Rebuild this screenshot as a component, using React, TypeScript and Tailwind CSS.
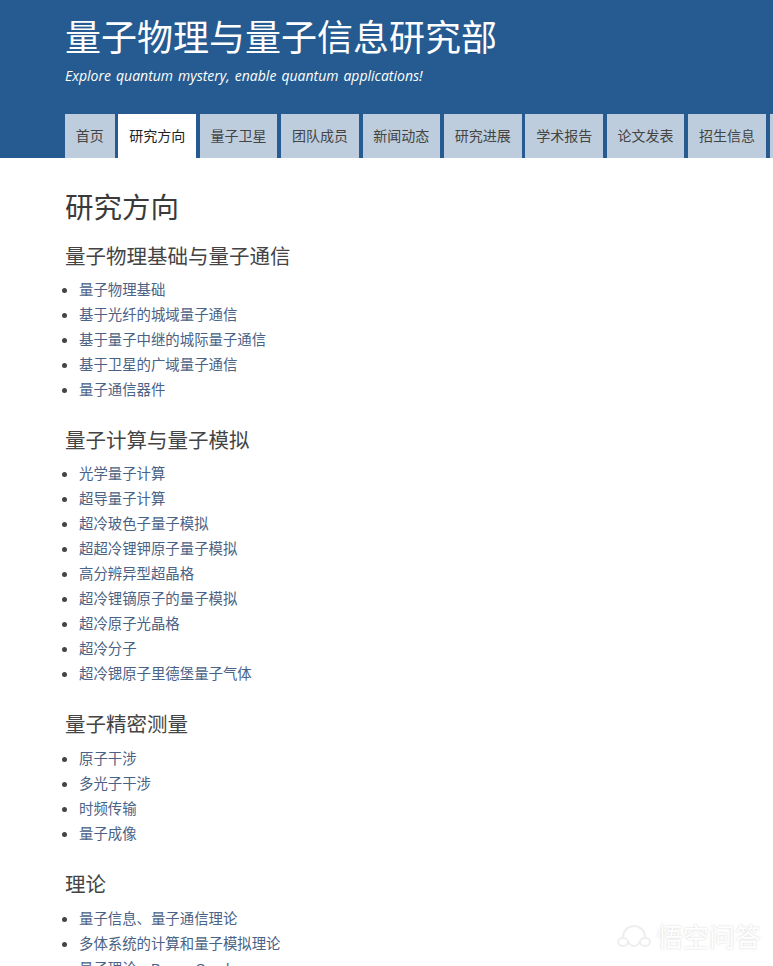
const tabs = ["首页", "研究方向", "量子卫星", "团队成员", "新闻动态", "研究进展", "学术报告", "论文发表", "招生信息"];

const sections = [
  {
    title: "量子物理基础与量子通信",
    items: ["量子物理基础", "基于光纤的城域量子通信", "基于量子中继的城际量子通信", "基于卫星的广域量子通信", "量子通信器件"],
  },
  {
    title: "量子计算与量子模拟",
    items: [
      "光学量子计算",
      "超导量子计算",
      "超冷玻色子量子模拟",
      "超超冷锂钾原子量子模拟",
      "高分辨异型超晶格",
      "超冷锂镝原子的量子模拟",
      "超冷原子光晶格",
      "超冷分子",
      "超冷锶原子里德堡量子气体",
    ],
  },
  {
    title: "量子精密测量",
    items: ["原子干涉", "多光子干涉", "时频传输", "量子成像"],
  },
  {
    title: "理论",
    items: ["量子信息、量子通信理论", "多体系统的计算和量子模拟理论", "量子理论、Boson Sand"],
  },
];

export default function App() {
  return (
    <div className="relative h-[966px] overflow-hidden bg-white font-['Liberation_Sans','Noto_Sans_CJK_SC',sans-serif]">
      {/* Header */}
      <header className="h-[158px] bg-[#255b90] pl-[65px] overflow-hidden flex flex-col">
        <h1 className="mt-[15px] text-[36px] leading-[48px] text-white whitespace-nowrap">量子物理与量子信息研究部</h1>
        <p className="mt-[3px] text-[14px] leading-[20px] italic text-white whitespace-nowrap font-['Open_Sans','Noto_Sans_CJK_SC',sans-serif] [word-spacing:1.4px]">
          Explore quantum mystery, enable quantum applications!
        </p>
        <nav className="mt-[28px] flex gap-[3.8px] h-[44px]">
          {tabs.map((tab, i) => (
            <a
              key={tab}
              className={
                i === 1
                  ? "shrink-0 h-full px-[10.8px] flex items-center text-[14px] text-[#222222] bg-white"
                  : "shrink-0 h-full px-[10.8px] flex items-center text-[14px] text-[#444444] bg-[#bdcddd]"
              }
            >
              {tab}
            </a>
          ))}
          <div className="shrink-0 w-[78px] h-full bg-[#bdcddd]" />
        </nav>
      </header>

      {/* Content */}
      <main className="pl-[65px] pt-[30px] text-[#333333]">
        <h2 className="text-[28.5px] leading-[40px] text-[#3a3a3a]">研究方向</h2>
        {sections.map((section, i) => (
          <section key={section.title} className={i === 0 ? "mt-[14px]" : "mt-[23px]"}>
            <h3 className="text-[20.5px] leading-[30px] text-[#444444]">{section.title}</h3>
            <ul className={i === 0 ? "mt-[5.6px] -ml-[3px]" : "mt-[6.8px] -ml-[3px]"}>
              {section.items.map((item) => (
                <li key={item} className="flex h-[25px] items-center gap-[12px] text-[14.4px] leading-[25px] text-[#4a6285]">
                  <span className="h-[5px] w-[5px] shrink-0 rounded-full bg-[#444444]" />
                  {item}
                </li>
              ))}
            </ul>
          </section>
        ))}
      </main>

      {/* Watermark */}
      <div className="absolute left-[615px] top-[923px] flex items-center gap-[4px] text-white opacity-60 [text-shadow:0_0_2px_rgba(120,120,120,0.6)]">
        <svg width="38" height="30" viewBox="0 0 38 30" fill="none" stroke="#e4e4e4" strokeWidth="2">
          <path d="M8 14a11 11 0 0 1 22 0" />
          <path d="M3 19a5 4 0 0 1 10 0 5 4 0 0 1-10 0zM14 19a5 4 0 0 0 10 0M25 19a5 4 0 0 1 10 0 5 4 0 0 1-10 0z" />
        </svg>
        <span className="text-[26px] leading-[30px] whitespace-nowrap">悟空问答</span>
      </div>
    </div>
  );
}
